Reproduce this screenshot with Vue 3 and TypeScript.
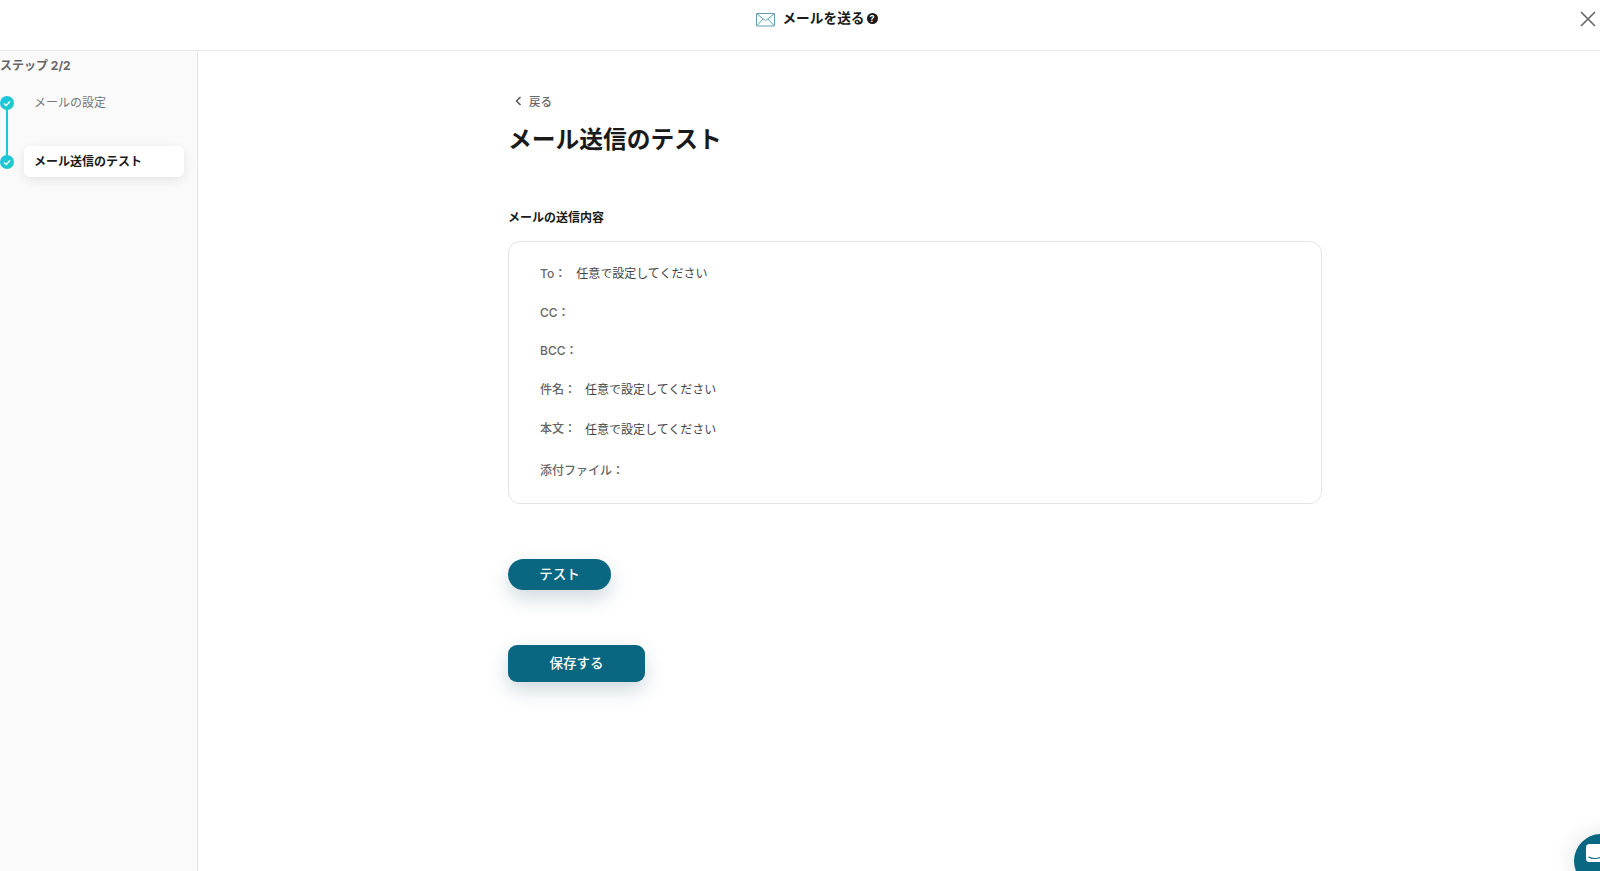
<script setup lang="ts">
interface Row { label: string; value?: string; cls: string }
const rows: Row[] = [
  { label: 'To：', value: '任意で設定してください', cls: 'r-to' },
  { label: 'CC：', cls: 'r-cc' },
  { label: 'BCC：', cls: 'r-bcc' },
  { label: '件名：', value: '任意で設定してください', cls: 'r-subject' },
  { label: '本文：', value: '任意で設定してください', cls: 'r-body' },
  { label: '添付ファイル：', cls: 'r-file' },
]
</script>

<template>
  <div class="page">
    <header class="top">
      <div class="title">
        <svg class="mail" width="20" height="14" viewBox="0 0 20 14" fill="none" stroke="#5f9fb4" stroke-width="1">
          <rect x="0.5" y="0.5" width="18" height="12.5" rx="0.5" />
          <path d="M0.8 0.8 L9.5 7.6 L18.2 0.8 M0.8 12.8 L7 6 M18.2 12.8 L12 6" />
        </svg>
        <span class="title-text">メールを送る</span>
        <span class="help">?</span>
      </div>
      <svg class="close" width="16" height="16" viewBox="0 0 16 16" fill="none" stroke="#666" stroke-width="1.6">
        <path d="M1 1 L15 15 M15 1 L1 15" />
      </svg>
    </header>
    <div class="body">
      <aside class="side">
        <div class="step-count">ステップ 2/2</div>
        <div class="steps">
          <div class="rail"></div>
          <div class="step done">
            <span class="dot"><svg width="8" height="7" viewBox="0 0 8 7" fill="none" stroke="#fff" stroke-width="1.4"><path d="M1 3.5 L3.2 5.6 L7 1.2" /></svg></span>
            <span class="step-label">メールの設定</span>
          </div>
          <div class="step active">
            <span class="dot"><svg width="8" height="7" viewBox="0 0 8 7" fill="none" stroke="#fff" stroke-width="1.4"><path d="M1 3.5 L3.2 5.6 L7 1.2" /></svg></span>
            <span class="step-label">メール送信のテスト</span>
          </div>
        </div>
      </aside>
      <main class="main">
        <div class="back">
          <svg width="7" height="10" viewBox="0 0 7 10" fill="none" stroke="#555" stroke-width="1.5"><path d="M5.5 1 L1.5 5 L5.5 9" /></svg>
          <span>戻る</span>
        </div>
        <h1 class="heading">メール送信のテスト</h1>
        <h2 class="section">メールの送信内容</h2>
        <section class="card">
          <div v-for="r in rows" :key="r.label" class="row" :class="r.cls">
            <span class="lbl">{{ r.label }}</span>
            <span v-if="r.value" class="val">{{ r.value }}</span>
          </div>
        </section>
        <button class="btn test">テスト</button>
        <button class="btn save">保存する</button>
      </main>
    </div>
    <div class="chat">
      <svg width="20" height="20" viewBox="0 0 20 20" fill="#fff"><rect x="1" y="1" width="18" height="18" rx="3.5" /><path d="M3.5 14 C7 16 13 16 16.5 14" fill="none" stroke="#0a6781" stroke-width="1.2" /></svg>
    </div>
  </div>
</template>

<style>
html, body { margin: 0; padding: 0; background: #fff; overflow: hidden; }
</style>

<style scoped>
.page {
  position: relative;
  width: 1600px;
  height: 871px;
  overflow: hidden;
  display: flex;
  flex-direction: column;
  font-family: "Inter", "Noto Sans CJK JP", sans-serif;
  color: #111;
  background: #fff;
}
.top {
  position: relative;
  height: 50px;
  flex: none;
  border-bottom: 1px solid #e9e9e9;
  display: flex;
  justify-content: center;
}
.title {
  display: flex;
  align-items: flex-start;
  margin-left: 34px;
  padding-top: 10px;
}
.mail { margin-top: 3px; margin-right: 6px; }
.title-text { font-size: 13.7px; font-weight: 700; line-height: 16px; color: #1a1a1a; }
.help {
  width: 11px;
  height: 11px;
  margin: 3px 0 0 2px;
  border-radius: 50%;
  background: #1a1a1a;
  color: #fff;
  font-size: 9px;
  font-weight: 700;
  line-height: 11px;
  text-align: center;
}
.close { position: absolute; right: 4px; top: 11px; }
.body { flex: 1; display: flex; min-height: 0; }
.side {
  width: 197px;
  flex: none;
  background: #fafafa;
  border-right: 1px solid #e4e4e4;
  box-sizing: content-box;
}
.step-count {
  font-size: 12px;
  font-weight: 700;
  line-height: 16px;
  color: #666;
  margin-top: 7px;
}
.steps { position: relative; margin-top: 13px; }
.rail {
  position: absolute;
  left: 6px;
  top: 16px;
  width: 1.5px;
  height: 57px;
  background: #14cbd6;
}
.step { display: flex; align-items: center; height: 31px; }
.step + .step { margin-top: 28px; }
.dot {
  width: 14px;
  height: 14px;
  border-radius: 50%;
  background: linear-gradient(135deg, #1fc2e6, #1ccdc0);
  display: flex;
  align-items: center;
  justify-content: center;
  flex: none;
  position: relative;
  z-index: 1;
  margin-top: 1px;
}
.step-label {
  margin-left: 10px;
  width: 160px;
  height: 31px;
  line-height: 32px;
  padding-left: 10px;
  box-sizing: border-box;
  border-radius: 6px;
  font-size: 12px;
}
.done .step-label { color: #777; }
.active .step-label {
  background: #fff;
  font-weight: 700;
  color: #1a1a1a;
  box-shadow: 0 3px 12px rgba(0, 0, 0, 0.09);
}
.main {
  flex: 1;
  padding: 0 0 0 310px;
  display: flex;
  flex-direction: column;
  align-items: flex-start;
}
.back {
  display: flex;
  align-items: center;
  gap: 7px;
  margin: 42px 0 0 7px;
  height: 16px;
  font-size: 11.5px;
  font-weight: 500;
  color: #666;
}
.heading {
  margin: 14px 0 0;
  font-size: 23.75px;
  font-weight: 700;
  line-height: 34px;
  color: #1a1a1a;
}
.section {
  margin: 53px 0 0;
  font-size: 12px;
  font-weight: 700;
  line-height: 16px;
  color: #1a1a1a;
}
.card {
  width: 814px;
  height: 263px;
  margin-top: 15px;
  box-sizing: border-box;
  border: 1px solid #e4e4e4;
  border-radius: 12px;
  padding: 22px 31px 0;
}
.row { display: flex; font-size: 12px; line-height: 20px; height: 20px; }
.lbl { color: #666; font-weight: 500; margin-right: 2px; }
.val { color: #444; margin-left: 7px; }
.r-to .val { margin-left: 8px; }
.r-cc, .r-bcc, .r-subject { margin-top: 18.7px; }
.r-body { margin-top: 20px; }
.r-body .lbl { position: relative; top: -1px; }
.r-file { margin-top: 21px; }
.btn {
  display: block;
  border: 0;
  padding: 0 0 4px;
  background: #0a6781;
  color: #fff;
  font-family: inherit;
  font-size: 13.5px;
  font-weight: 500;
  box-shadow: 0 8px 20px rgba(10, 60, 90, 0.2);
}
.test {
  width: 103px;
  height: 31px;
  margin-top: 55px;
  border-radius: 16px;
}
.save {
  width: 137px;
  height: 37px;
  margin-top: 55px;
  border-radius: 9px;
}
.chat {
  position: absolute;
  left: 1574px;
  top: 834px;
  width: 54px;
  height: 54px;
  border-radius: 50%;
  background: #0a6781;
  box-shadow: 0 0 24px rgba(0, 0, 0, 0.12);
  display: flex;
  align-items: flex-start;
  padding: 9px 0 0 11px;
  box-sizing: border-box;
}
</style>
